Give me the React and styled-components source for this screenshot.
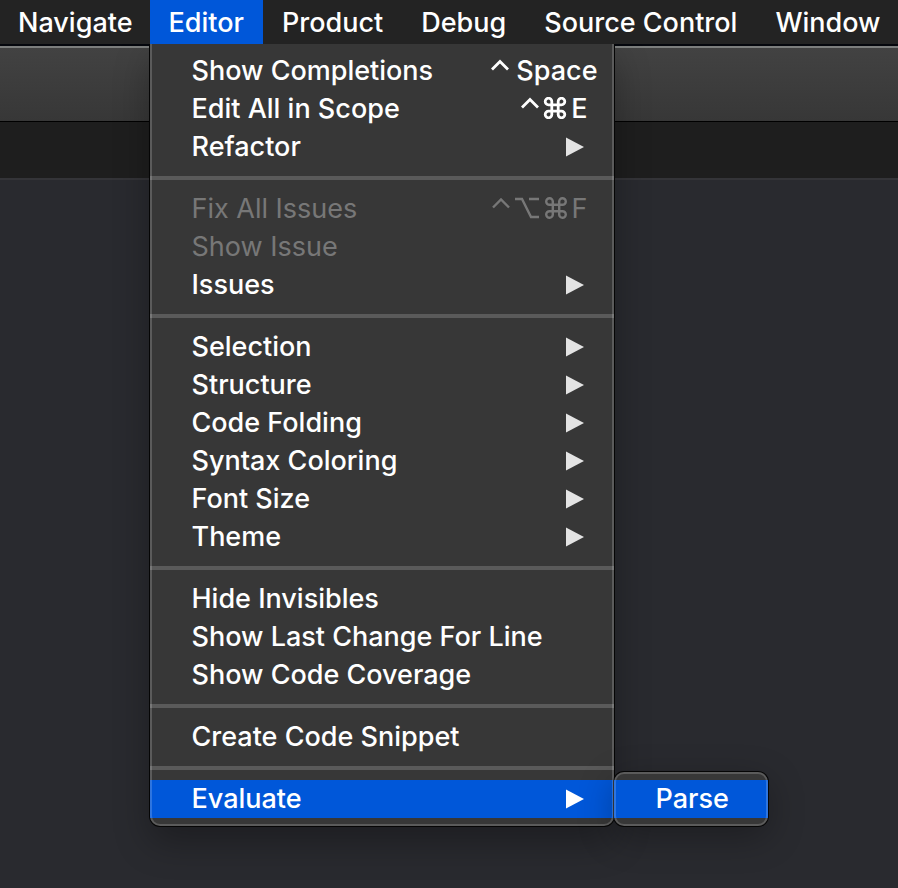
import React from "react";
import styled, { createGlobalStyle, css } from "styled-components";

const GlobalStyle = createGlobalStyle`
  * { box-sizing: border-box; }
  body {
    margin: 0;
    background: #292a2f;
    color: #fff;
    font-family: Inter, "Liberation Sans", sans-serif;
    font-size: 27px;
    line-height: 36px;
    overflow-x: hidden;
  }
`;

const Page = styled.div`
  min-height: 100vh;
  overflow: hidden;
`;

const MenuBar = styled.ul`
  display: flex;
  height: 44px;
  margin: 0;
  padding: 0;
  list-style: none;
  background: #232323;
`;

const MenuBarItem = styled.li`
  position: relative;
  flex: none;
`;

const buttonReset = css`
  margin: 0;
  border: 0;
  font: inherit;
  font-weight: 500;
  color: inherit;
  text-align: left;
  white-space: nowrap;
`;

const MenuTitle = styled.button`
  ${buttonReset}
  height: 44px;
  padding: 2px 19px 0;
  background: ${({ $open }) => ($open ? "#0057d9" : "transparent")};
  ${MenuBarItem}:first-child > & { padding: 2px 17px 0 18px; }
`;

const panel = css`
  position: absolute;
  margin: 0;
  padding: 8px 0;
  list-style: none;
  background: #373737;
  &::after {
    content: "";
    position: absolute;
    inset: 0;
    border: 2px solid rgba(255, 255, 255, 0.18);
    border-radius: inherit;
    pointer-events: none;
  }
`;

const Menu = styled.ul`
  ${panel}
  top: 100%;
  left: 0;
  width: 464px;
  border-radius: 0 0 10px 10px;
  box-shadow: 0 0 0 1px #050505, 0 16px 36px rgba(0, 0, 0, 0.3);
  clip-path: inset(0 -300px -100px -100px);
  &::after { border-top: 0; }
`;

const Submenu = styled.ul`
  ${panel}
  left: 100%;
  bottom: -8px;
  width: 154px;
  border-radius: 10px;
  box-shadow: 0 0 0 1px #050505, 0 10px 36px rgba(0, 0, 0, 0.3);
`;

const Entry = styled.li`
  position: relative;
`;

const EntryButton = styled.button`
  ${buttonReset}
  display: flex;
  align-items: center;
  justify-content: space-between;
  width: 100%;
  height: 38px;
  padding: 0 ${({ $wideKey }) => ($wideKey ? 16 : 26)}px 0 42px;
  background: ${({ $active }) => ($active ? "#0057d9" : "transparent")};
  &:disabled { color: #777; font-weight: 400; }
`;

const Separator = styled.li`
  height: 4px;
  margin: 10px 0;
  background: #5a5a5a;
`;

const Shortcut = styled.span`
  display: flex;
  align-items: center;
  gap: ${({ $wideKey }) => ($wideKey ? 7 : 4)}px;
`;

const Glyph = styled.svg`
  display: block;
  flex: none;
  margin-bottom: 2px;
  fill: none;
  stroke: currentColor;
  stroke-width: ${({ $thin }) => ($thin ? 2.4 : 2.8)};
`;

const Arrow = styled.svg`
  display: block;
  margin-right: 4px;
  fill: ${({ $active }) => ($active ? "#fff" : "#e4e4e4")};
`;

const Toolbar = styled.div`
  height: 78px;
  border-top: 2px solid #05070d;
  border-bottom: 1px solid #000;
  background: linear-gradient(#7c7e7d 0 2px, #424242 2px, #373737);
`;

const TabStrip = styled.div`
  height: 58px;
  background: #1e1e1e;
  border-bottom: 2px solid #343438;
`;

const Control = ({ thin }) => (
  <Glyph $thin={thin} width="18" height="22" viewBox="0 0 18 22" aria-label="Control">
    <path d="M1 10.5 9 2.5l8 8" />
  </Glyph>
);

const Option = ({ thin }) => (
  <Glyph $thin={thin} width="26" height="22" viewBox="0 0 26 22" aria-label="Option">
    <path d="M1 2h7l9 18h8M15 2h10" />
  </Glyph>
);

const Command = ({ thin }) => (
  <Glyph $thin={thin} width="24" height="22" viewBox="-1 0 24 22" aria-label="Command">
    <path d="M7.8 7.8V4.6a3.3 3.3 0 1 0-3.3 3.2h13a3.3 3.3 0 1 0-3.3-3.2v12.8a3.3 3.3 0 1 0 3.3-3.2h-13a3.3 3.3 0 1 0 3.3 3.2z" />
  </Glyph>
);

const modifiers = { control: Control, option: Option, command: Command };

const groups = [
  [
    { label: "Show Completions", mods: ["control"], letter: "Space" },
    { label: "Edit All in Scope", mods: ["control", "command"], letter: "E" },
    { label: "Refactor", more: true },
  ],
  [
    { label: "Fix All Issues", mods: ["control", "option", "command"], letter: "F", disabled: true },
    { label: "Show Issue", disabled: true },
    { label: "Issues", more: true },
  ],
  ["Selection", "Structure", "Code Folding", "Syntax Coloring", "Font Size", "Theme"].map(
    (label) => ({ label, more: true })
  ),
  [{ label: "Hide Invisibles" }, { label: "Show Last Change For Line" }, { label: "Show Code Coverage" }],
  [{ label: "Create Code Snippet" }],
  [{ label: "Evaluate", more: true, active: true, children: ["Parse"] }],
];

function MenuEntry({ label, mods, letter, more, disabled, active, children }) {
  const wideKey = letter?.length > 1;
  return (
    <Entry>
      <EntryButton type="button" disabled={disabled} $active={active} $wideKey={wideKey}>
        {label}
        {letter && (
          <Shortcut $wideKey={wideKey}>
            {mods.map((name) => {
              const Icon = modifiers[name];
              return <Icon key={name} thin={disabled} />;
            })}
            <span>{letter}</span>
          </Shortcut>
        )}
        {more && (
          <Arrow $active={active} width="18" height="20" viewBox="0 0 18 20" aria-hidden="true">
            <path d="M0 0.5 18 10 0 19.5z" />
          </Arrow>
        )}
      </EntryButton>
      {children && (
        <Submenu>
          {children.map((name) => (
            <Entry key={name}>
              <EntryButton type="button" $active>{name}</EntryButton>
            </Entry>
          ))}
        </Submenu>
      )}
    </Entry>
  );
}

const titles = ["Navigate", "Editor", "Product", "Debug", "Source Control", "Window"];

export default function App() {
  return (
    <Page>
      <GlobalStyle />
      <nav>
        <MenuBar>
          {titles.map((title) => (
            <MenuBarItem key={title}>
              <MenuTitle type="button" $open={title === "Editor"}>{title}</MenuTitle>
              {title === "Editor" && (
                <Menu>
                  {groups.map((group, index) => (
                    <React.Fragment key={index}>
                      {index > 0 && <Separator role="separator" />}
                      {group.map((entry) => (
                        <MenuEntry key={entry.label} {...entry} />
                      ))}
                    </React.Fragment>
                  ))}
                </Menu>
              )}
            </MenuBarItem>
          ))}
        </MenuBar>
      </nav>
      <Toolbar />
      <TabStrip />
    </Page>
  );
}
